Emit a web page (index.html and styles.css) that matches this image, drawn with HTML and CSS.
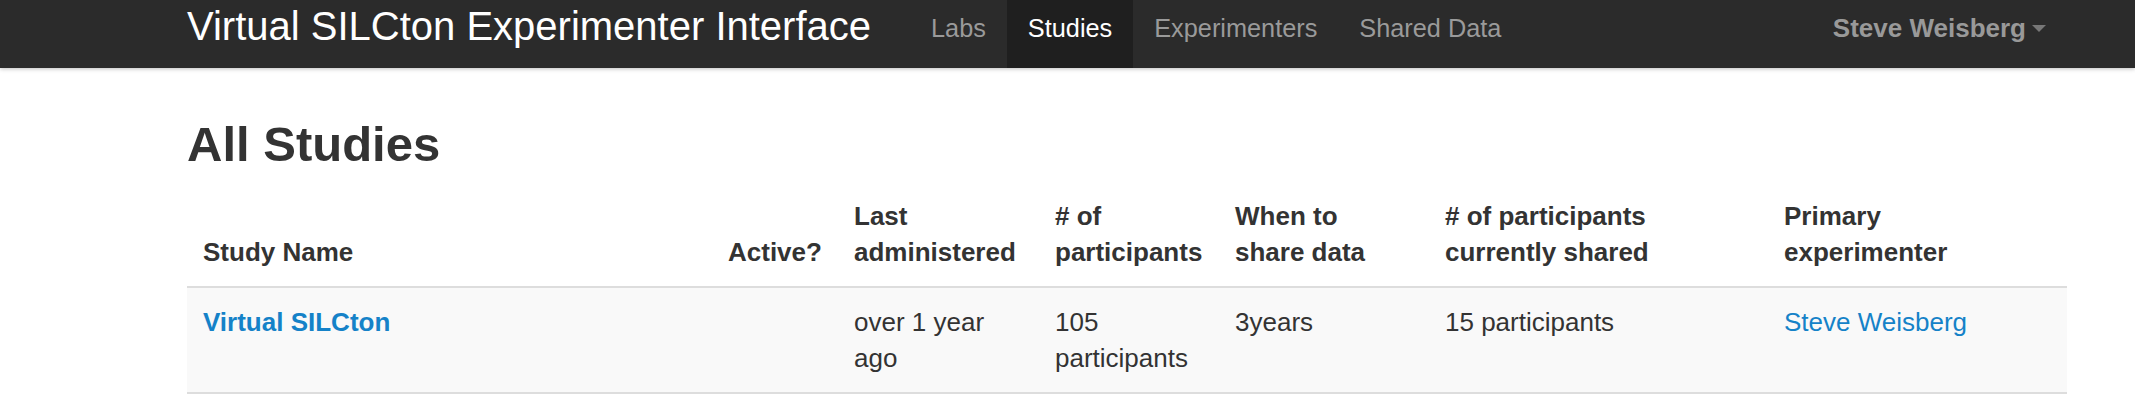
FILE: index.html
```html
<!DOCTYPE html>
<html lang="en">
<head>
  <meta charset="UTF-8">
  <meta name="viewport" content="width=device-width, initial-scale=1.0">
  <title>All Studies</title>
  <link rel="stylesheet" href="styles.css">
</head>
<body>
  <nav class="navbar">
    <div class="navbar-inner">
      <a class="brand" href="#">Virtual SILCton Experimenter Interface</a>
      <ul class="nav">
        <li><a href="#">Labs</a></li>
        <li class="active"><a href="#">Studies</a></li>
        <li><a href="#">Experimenters</a></li>
        <li><a href="#">Shared Data</a></li>
      </ul>
      <div class="user-menu">
        <a href="#">Steve Weisberg<span class="caret"></span></a>
      </div>
    </div>
  </nav>

  <div class="container">
    <h1>All Studies</h1>

    <table class="studies">
      <colgroup>
        <col class="col-name">
        <col class="col-active">
        <col class="col-last">
        <col class="col-count">
        <col class="col-when">
        <col class="col-shared">
        <col class="col-primary">
      </colgroup>
      <thead>
        <tr>
          <th>Study Name</th>
          <th>Active?</th>
          <th>Last administered</th>
          <th># of participants</th>
          <th>When to share data</th>
          <th># of participants currently shared</th>
          <th>Primary experimenter</th>
        </tr>
      </thead>
      <tbody>
        <tr>
          <td><a class="study-link" href="#">Virtual SILCton</a></td>
          <td></td>
          <td>over 1 year ago</td>
          <td>105 participants</td>
          <td>3years</td>
          <td>15 participants</td>
          <td><a href="#">Steve Weisberg</a></td>
        </tr>
      </tbody>
    </table>
  </div>
</body>
</html>
```

FILE: styles.css
```css
body {
  margin: 0;
  font-family: "Liberation Sans", Arial, sans-serif;
  color: #333;
  background-color: #fff;
}

a {
  text-decoration: none;
}

.navbar {
  background-color: #2b2b2b;
  height: 68px;
  box-shadow: 0 1px 4px rgba(0, 0, 0, 0.25);
}

.navbar-inner {
  display: flex;
  width: 1880px;
  margin-left: 187px;
  height: 68px;
}

.brand {
  font-size: 40px;
  line-height: 46px;
  padding-top: 3px;
  color: #fff;
  width: 723px;
  white-space: nowrap;
}

.nav {
  display: flex;
  list-style: none;
  margin: 0;
  padding: 0;
}

.nav a {
  display: block;
  height: 68px;
  box-sizing: border-box;
  padding: 13px 21px 0;
  font-size: 25.3px;
  line-height: 30px;
  color: #9a9a9a;
}

.nav .active a {
  background-color: #1f1f1f;
  color: #fff;
}

.user-menu {
  margin-left: auto;
  padding: 13px 21px 0 0;
}

.user-menu a {
  font-size: 26px;
  line-height: 30px;
  font-weight: bold;
  color: #999;
}

.caret {
  display: inline-block;
  width: 0;
  height: 0;
  margin-left: 6px;
  vertical-align: 5px;
  border-top: 7px solid #777;
  border-left: 7px solid transparent;
  border-right: 7px solid transparent;
}

.container {
  width: 1880px;
  margin-left: 187px;
}

h1 {
  font-size: 49px;
  line-height: 54px;
  font-weight: bold;
  margin: 49px 0 11px;
}

.studies {
  width: 100%;
  table-layout: fixed;
  border-collapse: collapse;
  font-size: 26px;
  line-height: 36px;
}

.col-name { width: 525px; }
.col-active { width: 126px; }
.col-last { width: 201px; }
.col-count { width: 180px; }
.col-when { width: 210px; }
.col-shared { width: 339px; }
.col-primary { width: 299px; }

.studies th,
.studies td {
  padding: 16px;
  text-align: left;
}

.studies th {
  vertical-align: bottom;
  font-weight: bold;
  border-bottom: 2px solid #ddd;
}

.studies td {
  vertical-align: top;
  background-color: #f9f9f9;
  border-bottom: 2px solid #ddd;
}

.studies a {
  color: #1582c8;
}

.study-link {
  font-weight: bold;
}
```
